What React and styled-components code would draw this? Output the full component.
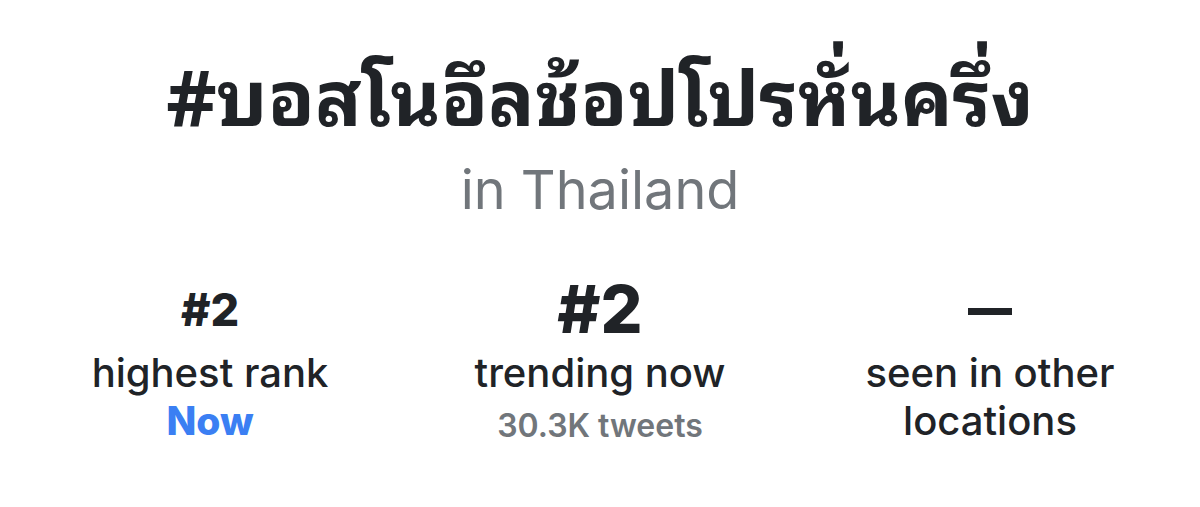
import React from 'react'
import styled, { createGlobalStyle } from 'styled-components'

const GlobalStyle = createGlobalStyle`
  html, body {
    margin: 0;
    padding: 0;
    background: #ffffff;
  }
  body {
    font-family: Inter, "Noto Sans Thai Looped", "Noto Sans Thai", "Noto Sans", sans-serif;
    color: #202327;
    overflow: hidden;
  }
`

const ScPage = styled.div`
  width: 1200px;
  height: 507px;
  display: flex;
  flex-direction: column;
  align-items: center;
  padding-top: 44px;
  box-sizing: border-box;
`

const ScTitle = styled.h1`
  margin: 0;
  font-family: "Noto Sans Thai Looped", Loma, Garuda, Inter, "Noto Sans Thai", sans-serif;
  font-size: 77px;
  font-weight: 700;
  line-height: 96px;
  color: #202327;
`

const ScLocation = styled.div`
  margin-top: 14px;
  font-size: 54px;
  font-weight: 400;
  line-height: 72px;
  color: #71767b;
`

const ScStats = styled.div`
  display: grid;
  grid-template-columns: repeat(3, 390px);
  margin-top: 53px;
`

const ScStat = styled.div`
  display: flex;
  flex-direction: column;
  align-items: center;
  text-align: center;
`

const ScValue = styled.div`
  height: 60px;
  margin-bottom: 10px;
  display: flex;
  align-items: center;
  font-weight: 800;
  font-size: ${p => (p.$big ? '66px' : '45px')};
  color: #202327;
`

const ScDash = styled.span`
  display: block;
  width: 44px;
  height: 7px;
  margin-top: 4px;
  background: #202327;
`

const ScLabel = styled.div`
  font-size: 40px;
  font-weight: 500;
  line-height: 48px;
  color: #202327;
`

const ScNote = styled.div`
  font-size: ${p => (p.$accent ? '39px' : '32px')};
  font-weight: ${p => (p.$accent ? 800 : 600)};
  line-height: ${p => (p.$accent ? '48px' : '58px')};
  color: ${p => (p.$accent ? '#3b7ff3' : '#71767b')};
`

const stats = [
  { value: '#2', label: ['highest rank'], note: 'Now', accent: true },
  { value: '#2', big: true, label: ['trending now'], note: '30.3K tweets' },
  { dash: true, label: ['seen in other', 'locations'] },
]

const App = () => {
  return (
    <>
      <GlobalStyle />
      <ScPage>
        <ScTitle>#บอสโนอึลช้อปโปรหั่นครึ่ง</ScTitle>
        <ScLocation>in Thailand</ScLocation>
        <ScStats>
          {stats.map((s, i) => (
            <ScStat key={i}>
              <ScValue $big={s.big}>{s.dash ? <ScDash /> : s.value}</ScValue>
              {s.label.map(l => <ScLabel key={l}>{l}</ScLabel>)}
              {s.note && <ScNote $accent={s.accent}>{s.note}</ScNote>}
            </ScStat>
          ))}
        </ScStats>
      </ScPage>
    </>
  )
}

export default App
